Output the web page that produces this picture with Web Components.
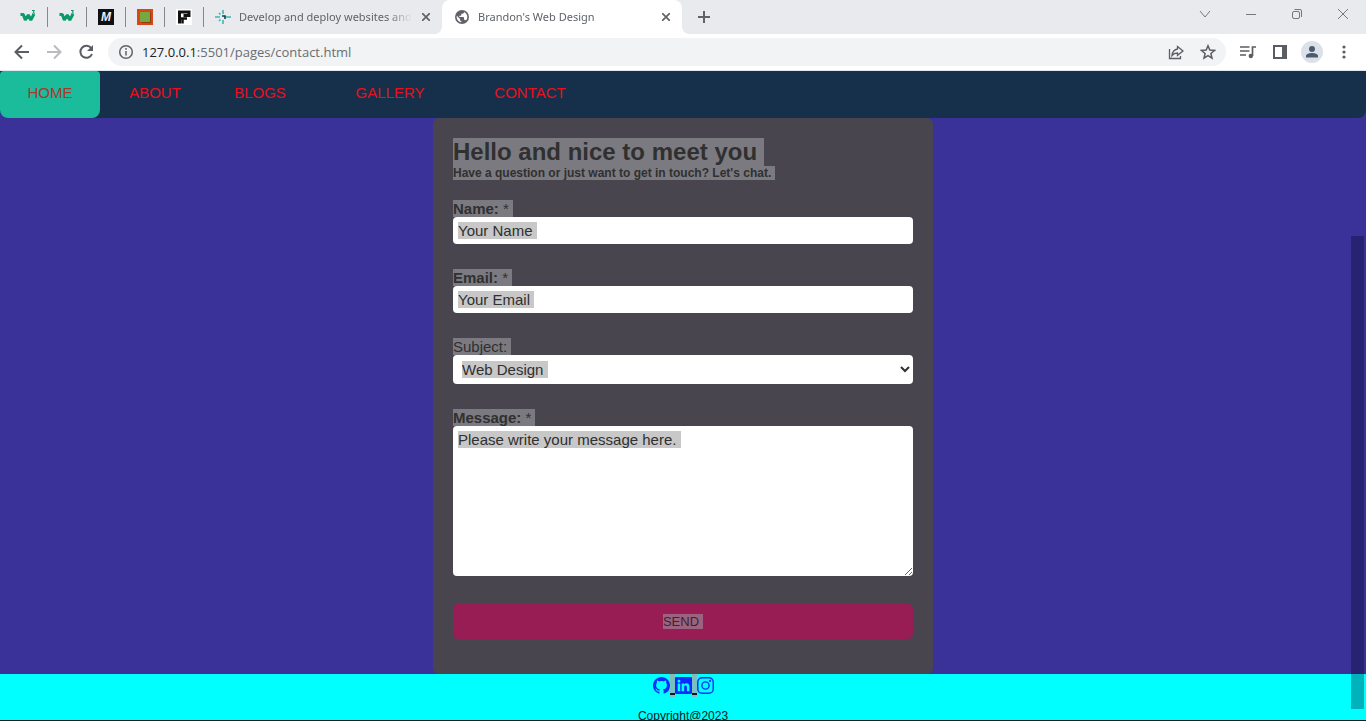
<!DOCTYPE html>
<html lang="en">
<head>
<meta charset="utf-8">
<title>Brandon's Web Design</title>
<style>
html, body { margin: 0; height: 100%; overflow: hidden; }
body { font-family: "Liberation Sans", Arial, sans-serif; }
</style>
</head>
<body>
<browser-window>
  <tab-strip slot="tabs"></tab-strip>
  <browser-toolbar slot="toolbar"></browser-toolbar>
  <site-nav></site-nav>
  <main><contact-form></contact-form></main>
  <site-footer></site-footer>
</browser-window>

<template id="browser-window">
<style>
:host { display: flex; flex-direction: column; height: 100vh; box-sizing: border-box; border-bottom: 1px solid #101c24; background: #3a3199; position: relative; }
.page { flex: 1 1 0; min-height: 0; overflow: hidden; }
::slotted(main) { display: flex; justify-content: center; }
.thumb { position: absolute; right: 2px; top: 236px; bottom: 11px; width: 13px; background: rgba(0, 0, 30, .3); }
</style>
<slot name="tabs"></slot>
<slot name="toolbar"></slot>
<div class="page"><slot></slot></div>
<div class="thumb"></div>
</template>

<template id="tab-strip">
<style>
:host { display: flex; height: 34px; padding-left: 9px; background: #e8eaed; align-items: center; font: 11px/16px "Noto Sans", sans-serif; color: #5f6368; }
.window { display: flex; margin-left: auto; height: 28px; align-self: flex-start; }
button { border: 0; padding: 0; background: none; color: inherit; display: grid; place-items: center; }
.window button { width: 46px; color: #777; }
.new { width: 28px; height: 28px; margin-left: 8px; }
button svg { display: block; fill: none; stroke: currentColor; }
</style>
<pinned-tab><svg width="18" height="16" viewBox="0 0 18 16" fill="none" stroke="#069b68"><path d="M1.500 5.500h2.800l2 5.500 3-5 2.500 5 3.200-6" stroke-width="3" stroke-linejoin="bevel"/><path d="M13 1.500h2.500L14.200 3.200c2 0 1.500 2.500-1 1.800"/></svg></pinned-tab>
<pinned-tab><svg width="18" height="16" viewBox="0 0 18 16" fill="none" stroke="#069b68"><path d="M1.500 5.500h2.800l2 5.500 3-5 2.500 5 3.200-6" stroke-width="3" stroke-linejoin="bevel"/><path d="M13 1.500h2.500L14.200 3.200c2 0 1.500 2.500-1 1.800"/></svg></pinned-tab>
<pinned-tab><svg width="16" height="16" viewBox="0 0 16 16"><rect width="16" height="16" fill="#101014"/><text x="3" y="12" font-family="Liberation Sans" font-style="italic" font-weight="700" font-size="12" fill="#eee">M</text></svg></pinned-tab>
<pinned-tab><svg width="16" height="16" viewBox="0 0 16 16"><rect width="16" height="16" fill="#dc4518"/><path d="M3 3h11v11H5l-2-2z" fill="#8f3c12"/><rect x="3" y="3" width="10" height="10" fill="#75a83e"/></svg></pinned-tab>
<pinned-tab><svg width="16" height="16" viewBox="0 0 16 16"><rect width="16" height="16" fill="#fff"/><path d="M3.500 14.500V3H13v3.500H7.500" fill="none" stroke="#111" stroke-width="3"/><path d="M3.500 9.500H11M6.500 9v5.500" stroke="#111" stroke-width="2.500"/></svg></pinned-tab>
<browser-tab>
  <svg slot="icon" width="16" height="16" viewBox="0 0 16 16" fill="none" stroke="#35b9b5" stroke-width="1.600"><path d="M0 8h5M11 8h5M8 1v4M8 11v4M4 4l1.500 1.500M4 12l1.500-1.500"/><path d="M7 7h3v3" stroke="#163c4b"/></svg>
  Develop and deploy websites and apps
</browser-tab>
<browser-tab active>
  <svg slot="icon" width="16" height="16" viewBox="0 0 24 24"><circle cx="12" cy="12" r="10.500" fill="#5f6368"/><path d="M11 19.900C7.100 19.400 4 16.100 4 12c0-.6.100-1.200.2-1.800L9 15v1c0 1.100.9 2 2 2zM17.900 17.400c-.3-.8-1-1.400-1.900-1.400h-1v-3c0-.6-.4-1-1-1H8v-2h2c.6 0 1-.4 1-1V7h2c1.100 0 2-.9 2-2v-.4c2.900 1.200 5 4.100 5 7.400 0 2.100-.8 4-2.100 5.400z" fill="#fff"/></svg>
  Brandon's Web Design
</browser-tab>
<button class="new" aria-label="New tab"><svg width="12" height="12" stroke-width="2"><path d="M6 0v12M0 6h12"/></svg></button>
<div class="window">
  <button aria-label="Search tabs"><svg width="12" height="12"><path d="M1 3l5 6 5-6"/></svg></button>
  <button aria-label="Minimize"><svg width="12" height="12"><path d="M1 6.500h10"/></svg></button>
  <button aria-label="Restore"><svg width="12" height="12"><rect x="1.500" y="3.500" width="7" height="7" rx="1.500"/><path d="M3.500 1.500H9a1.500 1.500 0 0 1 1.500 1.500v6"/></svg></button>
  <button aria-label="Close"><svg width="12" height="12"><path d="M1 1l10 10M11 1L1 11"/></svg></button>
</div>
</template>

<template id="pinned-tab">
<style>
:host { display: grid; place-items: center; box-sizing: border-box; width: 39px; height: 20px; border-right: 1px solid #85878b; }
::slotted(svg) { display: block; overflow: visible; }
</style>
<slot></slot>
</template>

<template id="browser-tab">
<style>
:host { display: flex; align-items: center; box-sizing: border-box; width: 238px; height: 34px; padding: 0 10px 0 11px; gap: 8px; }
:host([active]) { width: 240px; padding-left: 12px; background: #fff; border-radius: 8px 8px 0 0; position: relative; }
:host([active])::before, :host([active])::after { content: ""; position: absolute; bottom: 0; width: 8px; height: 8px; }
:host([active])::before { right: 100%; background: radial-gradient(circle at 0 0, transparent 8px, #fff 8px); }
:host([active])::after { left: 100%; background: radial-gradient(circle at 100% 0, transparent 8px, #fff 8px); }
.title { flex: 1; min-width: 0; overflow: hidden; white-space: nowrap; -webkit-mask: linear-gradient(90deg, #000 calc(100% - 24px), transparent); }
button { border: 0; padding: 0; background: none; color: inherit; width: 12px; height: 16px; display: grid; place-items: center; }
::slotted(svg) { display: block; flex: none; }
</style>
<slot name="icon"></slot>
<span class="title"><slot></slot></span>
<button aria-label="Close tab"><svg width="8" height="8" fill="none" stroke="currentColor" stroke-width="1.700"><path d="M0 0l8 8M8 0L0 8"/></svg></button>
</template>

<template id="browser-toolbar">
<style>
:host { display: flex; align-items: center; height: 36px; padding: 0 6px; background: #fff; border-bottom: 1px solid #dfe6ee; color: #5f6368; }
button { border: 0; padding: 0; width: 32px; height: 28px; background: none; color: #5a5d62; display: grid; place-items: center; }
button[disabled] { color: #b9bbbe; }
svg { display: block; fill: none; stroke: currentColor; stroke-width: 2; }
.address { flex: 1; display: flex; align-items: center; height: 28px; margin: 0 6px; padding: 0 2px 0 10px; gap: 8px; border-radius: 14px; background: #f1f3f4; }
.url { flex: 1; font: 13px/20px "Open Sans", sans-serif; color: #6a6d71; }
.url b { font-weight: 400; color: #202124; }
.actions { display: flex; }
.avatar { width: 22px; height: 22px; border-radius: 11px; background: #dce0e8; display: grid; place-items: center; }
</style>
<button aria-label="Back"><svg width="16" height="16"><path d="M15 8H2M8 1.500L1.500 8 8 14.500"/></svg></button>
<button aria-label="Forward" disabled><svg width="16" height="16"><path d="M1 8h13M8 1.500L14.500 8 8 14.500"/></svg></button>
<button aria-label="Reload"><svg width="16" height="16"><path d="M13.200 4.200A6 6 0 1 0 14 10"/><path d="M15 1v6H9z" fill="currentColor" stroke="none"/></svg></button>
<div class="address">
  <svg width="16" height="16" style="stroke-width:1.500"><circle cx="8" cy="8" r="6.300"/><path d="M8 7v4.500M8 4v1.800"/></svg>
  <span class="url"><b>127.0.0.1</b>:5501/pages/contact.html</span>
  <div class="actions">
  <button aria-label="Share"><svg width="16" height="16" style="stroke-width:1.300"><path d="M1.500 5v9.500h11V12M9.500 2.500L15 7l-5.500 4.300V9C7 9 5.500 9.500 4 11.500 4.500 7.500 6.500 5.500 9.500 5z"/></svg></button>
  <button aria-label="Bookmark"><svg width="16" height="16" style="stroke-width:1.500"><path d="M8 1.800l1.800 4.300 4.700.4-3.600 3 1.100 4.600L8 11.600l-4 2.500 1.100-4.600-3.600-3 4.700-.4z"/></svg></button>
  </div>
</div>
<button aria-label="Media"><svg width="18" height="16" viewBox="0 0 18 16" style="stroke-width:1.700"><path d="M1 3h9.500M1 7h9.500M1 11h6M13.500 12V3H17"/><circle cx="11.800" cy="12" r="2.200" fill="currentColor" stroke="none"/></svg></button>
<button aria-label="Side panel"><svg width="14" height="14"><rect x="1" y="1" width="12" height="12"/><path d="M9 1h4v12H9z" fill="currentColor" stroke="none"/></svg></button>
<button aria-label="Profile"><span class="avatar"><svg width="14" height="14" style="fill:#4c5a6e;stroke:none"><circle cx="7" cy="4" r="3"/><path d="M1 12.500V11c0-2.200 4-3 6-3s6 .8 6 3v1.500z"/></svg></span></button>
<button aria-label="Menu"><svg width="4" height="14" style="fill:#5a5d62;stroke:none"><circle cx="2" cy="2" r="1.600"/><circle cx="2" cy="7" r="1.600"/><circle cx="2" cy="12" r="1.600"/></svg></button>
</template>

<template id="site-nav">
<style>
:host { display: block; background: #16304b; border-radius: 0 0 8px 8px; }
nav { display: flex; height: 47px; }
a { width: 100px; padding-bottom: 4px; box-sizing: border-box; font-size: 15px; line-height: 43px; text-align: center; color: #e8101c; text-decoration: none; }
a.home { background: #1abc9c; border-radius: 4px 4px 8px 8px; color: #a8392c; }
a.about { width: 110px; }
a.gallery { width: 160px; }
a.contact { width: 120px; }
</style>
<nav>
<a class="home" href="#home">HOME</a><a class="about" href="#about">ABOUT</a><a href="#blogs">BLOGS</a><a class="gallery" href="#gallery">GALLERY</a><a class="contact" href="#contact">CONTACT</a>
</nav>
</template>

<template id="form-field">
<style>
:host { display: flex; flex-direction: column; align-items: flex-start; margin-bottom: 25px; }
</style>
<slot name="label"></slot>
<slot></slot>
</template>

<template id="contact-form">
<style>
:host { display: block; box-sizing: border-box; width: 500px; max-width: 100%; padding: 20px 20px 35px; border-radius: 6px; background: #48454f; color: #303030; font-size: 15px; line-height: 17px; }
h1, h2 { margin: 0; width: fit-content; background: #7b7a80; }
h1 { font-size: 24px; line-height: 28px; padding-right: 7px; }
h2 { font-size: 12px; line-height: 14px; padding-right: 4px; margin-bottom: 20px; }
label { background: #7b7a80; padding-right: 4px; }
input, textarea, select { display: block; box-sizing: border-box; width: 100%; margin: 0; border: 0; border-radius: 4px; padding: 5px; background-color: #fff; color: #303030; font: inherit; }
input { height: 27px; }
select { height: 29px; background-image: linear-gradient(#c8c8c8, #c8c8c8); background-repeat: no-repeat; background-size: 86px 17px; background-position: 9px 6px; }
textarea { height: 150px; resize: vertical; }
::placeholder { color: #303030; opacity: 1; background: linear-gradient(#c8c8c8, #c8c8c8) no-repeat 0 0 / var(--mark) 17px; }
#name { --mark: 79px; }
#email { --mark: 76px; }
#message { --mark: 223px; }
form-field:last-of-type { margin-bottom: 28px; }
button { display: block; width: 100%; height: 35px; border: 0; border-radius: 5px; background: #991d55; color: #3b2433; font: 13px/15px "Liberation Sans", sans-serif; }
button span { background: #9b6380; padding-right: 4px; }
</style>
<form>
  <h1>Hello and nice to meet you</h1>
  <h2>Have a question or just want to get in touch? Let's chat.</h2>
  <form-field><label slot="label" for="name"><b>Name:</b> *</label><input id="name" type="text" placeholder="Your Name"></form-field>
  <form-field><label slot="label" for="email"><b>Email:</b> *</label><input id="email" type="email" placeholder="Your Email"></form-field>
  <form-field><label slot="label" for="subject">Subject:</label><select id="subject"><option>Web Design</option></select></form-field>
  <form-field><label slot="label" for="message"><b>Message:</b> *</label><textarea id="message" placeholder="Please write your message here."></textarea></form-field>
  <button type="button"><span>SEND</span></button>
</form>
</template>

<template id="site-footer">
<style>
:host { display: flex; flex-direction: column; align-items: center; gap: 11px; min-height: 60px; background: #0ff; color: #102020; font-size: 12px; line-height: 16px; }
div { display: flex; height: 23px; align-items: center; }
a { color: #0a2cff; }
svg { display: block; width: 17px; height: 17px; fill: currentColor; }
i { align-self: stretch; width: 5px; box-sizing: border-box; background: linear-gradient(#113, #113) no-repeat 0 19px / 5px 2px #7ac0c0; }
p { margin: 0; }
</style>
<div>
<a href="#github" aria-label="GitHub"><svg viewBox="0 0 16 16"><path d="M8 0C3.580 0 0 3.580 0 8c0 3.540 2.290 6.530 5.470 7.590.4.070.55-.17.55-.38 0-.19-.01-.82-.01-1.490-2.010.37-2.530-.49-2.690-.94-.09-.23-.48-.94-.82-1.130-.28-.15-.68-.52-.01-.53.63-.01 1.080.58 1.230.82.72 1.210 1.870.87 2.330.66.07-.52.28-.87.51-1.070-1.780-.2-3.640-.89-3.640-3.950 0-.87.31-1.590.82-2.150-.08-.2-.36-1.020.08-2.120 0 0 .67-.21 2.200.82.64-.18 1.320-.27 2-.27s1.360.09 2 .27c1.530-1.040 2.200-.82 2.200-.82.44 1.100.16 1.920.08 2.120.51.56.82 1.270.82 2.150 0 3.070-1.870 3.750-3.650 3.950.29.25.54.73.54 1.480 0 1.070-.01 1.930-.01 2.200 0 .21.15.46.55.38A8.010 8.010 0 0 0 16 8c0-4.420-3.580-8-8-8"/></svg></a><i></i>
<a href="#linkedin" aria-label="LinkedIn"><svg viewBox="0 0 16 16"><path d="M0 1.146C0 .513.526 0 1.175 0h13.650C15.474 0 16 .513 16 1.146v13.708c0 .633-.526 1.146-1.175 1.146H1.175C.526 16 0 15.487 0 14.854zm4.943 12.248V6.169H2.542v7.225zm-1.200-8.212c.837 0 1.358-.554 1.358-1.248-.015-.709-.52-1.248-1.342-1.248S2.400 3.226 2.400 3.934c0 .694.521 1.248 1.327 1.248zm4.908 8.212V9.359c0-.216.016-.432.08-.586.173-.431.568-.878 1.232-.878.869 0 1.216.662 1.216 1.634v3.865h2.401V9.250c0-2.220-1.184-3.252-2.764-3.252-1.274 0-1.845.7-2.165 1.193v.025h-.016l.016-.025V6.169h-2.400c.03.678 0 7.225 0 7.225z"/></svg></a><i></i>
<a href="#instagram" aria-label="Instagram"><svg viewBox="0 0 16 16"><rect x=".75" y=".75" width="14.500" height="14.500" rx="4" fill="none" stroke="currentColor" stroke-width="1.300"/><circle cx="8" cy="8" r="3.400" fill="none" stroke="currentColor" stroke-width="1.300"/><circle cx="12.300" cy="3.700" r="1"/></svg></a>
</div>
<p>Copyright@2023</p>
</template>

<script>
for (const name of ['browser-window', 'tab-strip', 'pinned-tab', 'browser-tab', 'browser-toolbar', 'site-nav', 'form-field', 'contact-form', 'site-footer']) {
  customElements.define(name, class extends HTMLElement {
    constructor() {
      super();
      this.attachShadow({ mode: 'open' }).append(document.getElementById(name).content.cloneNode(true));
    }
  });
}
</script>
</body>
</html>
